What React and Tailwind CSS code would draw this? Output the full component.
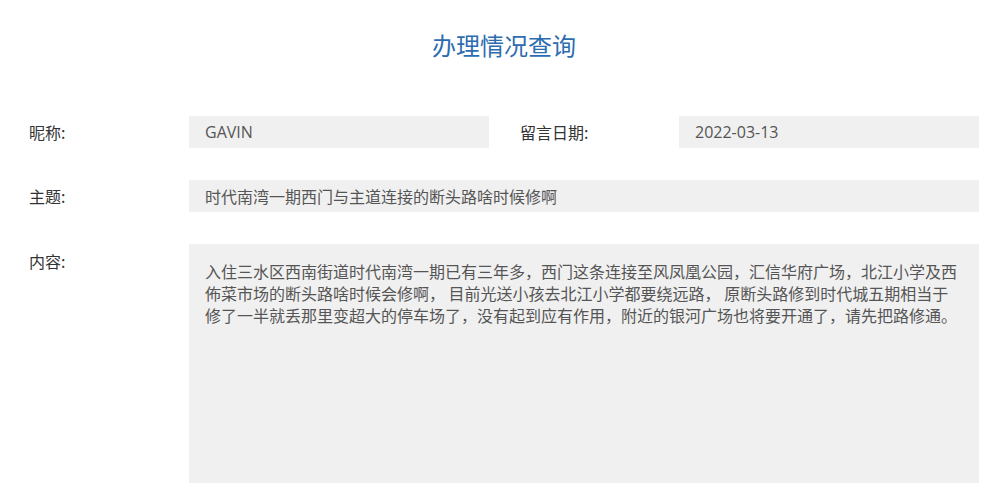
const font = { fontFamily: '"Noto Sans CJK SC", "Noto Sans", sans-serif' };
const latin = { fontFamily: '"Open Sans", "Noto Sans CJK SC", sans-serif' };

const Label = ({ children, w = 'w-[160px]', className = '' }) => (
  <div className={`${w} shrink-0 text-[16px] text-[#333] ${className}`}>{children}</div>
);

const App = () => {
  return (
    <div className="w-[983px] h-[487px] bg-white overflow-hidden" style={font}>
      <h1 className="pt-[29px] text-center text-[24px] leading-[32px] text-[#2d6cb0] pl-[25px]">办理情况查询</h1>

      <div className="pl-[29px] pr-[4px] pt-[55px] flex flex-col gap-[32px]">
        {/* row 1 */}
        <div className="flex items-center">
          <div className="flex items-center w-[460px]">
            <Label>昵称:</Label>
            <div className="w-[300px] h-[32px] bg-[#f0f0f0] px-4 flex items-center text-[16px] text-[#555]" style={latin}>GAVIN</div>
          </div>
          <div className="flex items-center ml-[31px]">
            <Label w="w-[159px]">留言日期:</Label>
            <div className="w-[300px] h-[32px] bg-[#f0f0f0] px-4 flex items-center text-[16px] text-[#555]" style={latin}>2022-03-13</div>
          </div>
        </div>

        {/* row 2 */}
        <div className="flex items-center">
          <Label>主题:</Label>
          <div className="w-[790px] h-[32px] bg-[#f0f0f0] px-4 flex items-center text-[16px] text-[#555]">
            时代南湾一期西门与主道连接的断头路啥时候修啊
          </div>
        </div>

        {/* row 3 */}
        <div className="flex items-start">
          <Label className="pt-[5px] leading-[24px]">内容:</Label>
          <div className="w-[790px] h-[239px] bg-[#f0f0f0] p-4 text-[16px] leading-[22px] text-[#555]">
            入住三水区西南街道时代南湾一期已有三年多，西门这条连接至风凤凰公园，汇信华府广场，北江小学及西佈菜市场的断头路啥时候会修啊， 目前光送小孩去北江小学都要绕远路， 原断头路修到时代城五期相当于修了一半就丢那里变超大的停车场了，没有起到应有作用，附近的银河广场也将要开通了，请先把路修通。
          </div>
        </div>
      </div>
    </div>
  );
};

export default App;
